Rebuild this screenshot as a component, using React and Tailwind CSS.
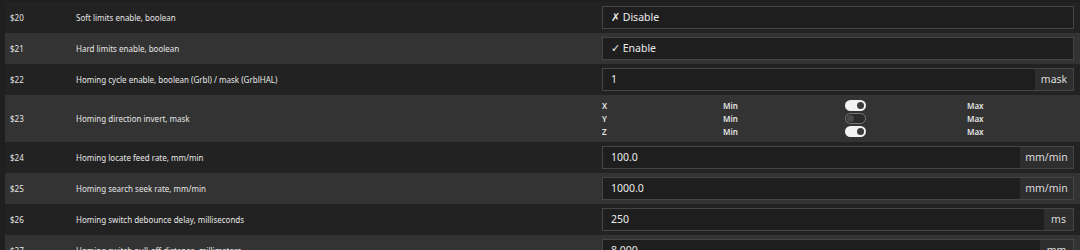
import React from 'react'

const rows = [
  { id: '$20', label: 'Soft limits enable, boolean', value: '\u2717 Disable' },
  { id: '$21', label: 'Hard limits enable, boolean', value: '\u2713 Enable' },
  { id: '$22', label: 'Homing cycle enable, boolean (Grbl) / mask (GrblHAL)', value: '1', unit: 'mask', unitW: 'w-[38px]' },
  { id: '$23', label: 'Homing direction invert, mask', axes: [['X', true], ['Y', false], ['Z', true]] },
  { id: '$24', label: 'Homing locate feed rate, mm/min', value: '100.0', unit: 'mm/min', unitW: 'w-[53px]' },
  { id: '$25', label: 'Homing search seek rate, mm/min', value: '1000.0', unit: 'mm/min', unitW: 'w-[53px]' },
  { id: '$26', label: 'Homing switch debounce delay, milliseconds', value: '250', unit: 'ms', unitW: 'w-[29px]' },
  { id: '$27', label: 'Homing switch pull-off distance, millimeters', value: '8.000', unit: 'mm', unitW: 'w-[33px]' },
]

function Toggle({ on }) {
  if (on) {
    return (
      <span className="flex items-center justify-end w-[21px] h-[11px] rounded-full bg-[#f2f2f2] pr-[2px]">
        <span className="w-[7px] h-[7px] rounded-full bg-[#3a3a3a]" />
      </span>
    )
  }
  return (
    <span className="flex items-center w-[21px] h-[11px] rounded-full bg-[#2a2a2a] border border-[#777] pl-[1px]">
      <span className="w-[7px] h-[7px] rounded-full bg-[#4a4a4a]" />
    </span>
  )
}

export default function App() {
  return (
    <div className="w-[1080px] h-[250px] overflow-hidden bg-[#1f1f1f] pl-[5px] pt-[2px] text-[#e6e6e6]" style={{ fontFamily: '"Noto Sans", "Open Sans", sans-serif' }}>
      {rows.map((row, i) => (
        <div key={row.id} className={`flex items-center py-[4px] ${i % 2 ? 'bg-[#333333]' : 'bg-[#222222]'}`}>
          <div className="w-[71px] pl-[5px] text-[8px]">{row.id}</div>
          <div className="w-[526px] text-[8px]">{row.label}</div>
          <div className="flex-1 pr-[6px]">
            {row.axes ? (
              <div className="flex flex-col">
                {row.axes.map(([axis, on]) => (
                  <div key={axis} className="flex items-center h-[13px] text-[8px] font-semibold">
                    <span className="w-[121px]">{axis}</span>
                    <span className="w-[122px]">Min</span>
                    <span className="w-[122px]"><Toggle on={on} /></span>
                    <span>Max</span>
                  </div>
                ))}
              </div>
            ) : (
              <div className="flex h-[23px] border border-[#454545] bg-[#1e1e1e] text-[10.5px]">
                <div className="flex-1 flex items-center pl-[8px] text-[#ececec]">{row.value}</div>
                {row.unit && (
                  <div className={`${row.unitW} flex items-center justify-center bg-[#2e2e2e] text-[#dcdcdc]`}>{row.unit}</div>
                )}
              </div>
            )}
          </div>
        </div>
      ))}
    </div>
  )
}
